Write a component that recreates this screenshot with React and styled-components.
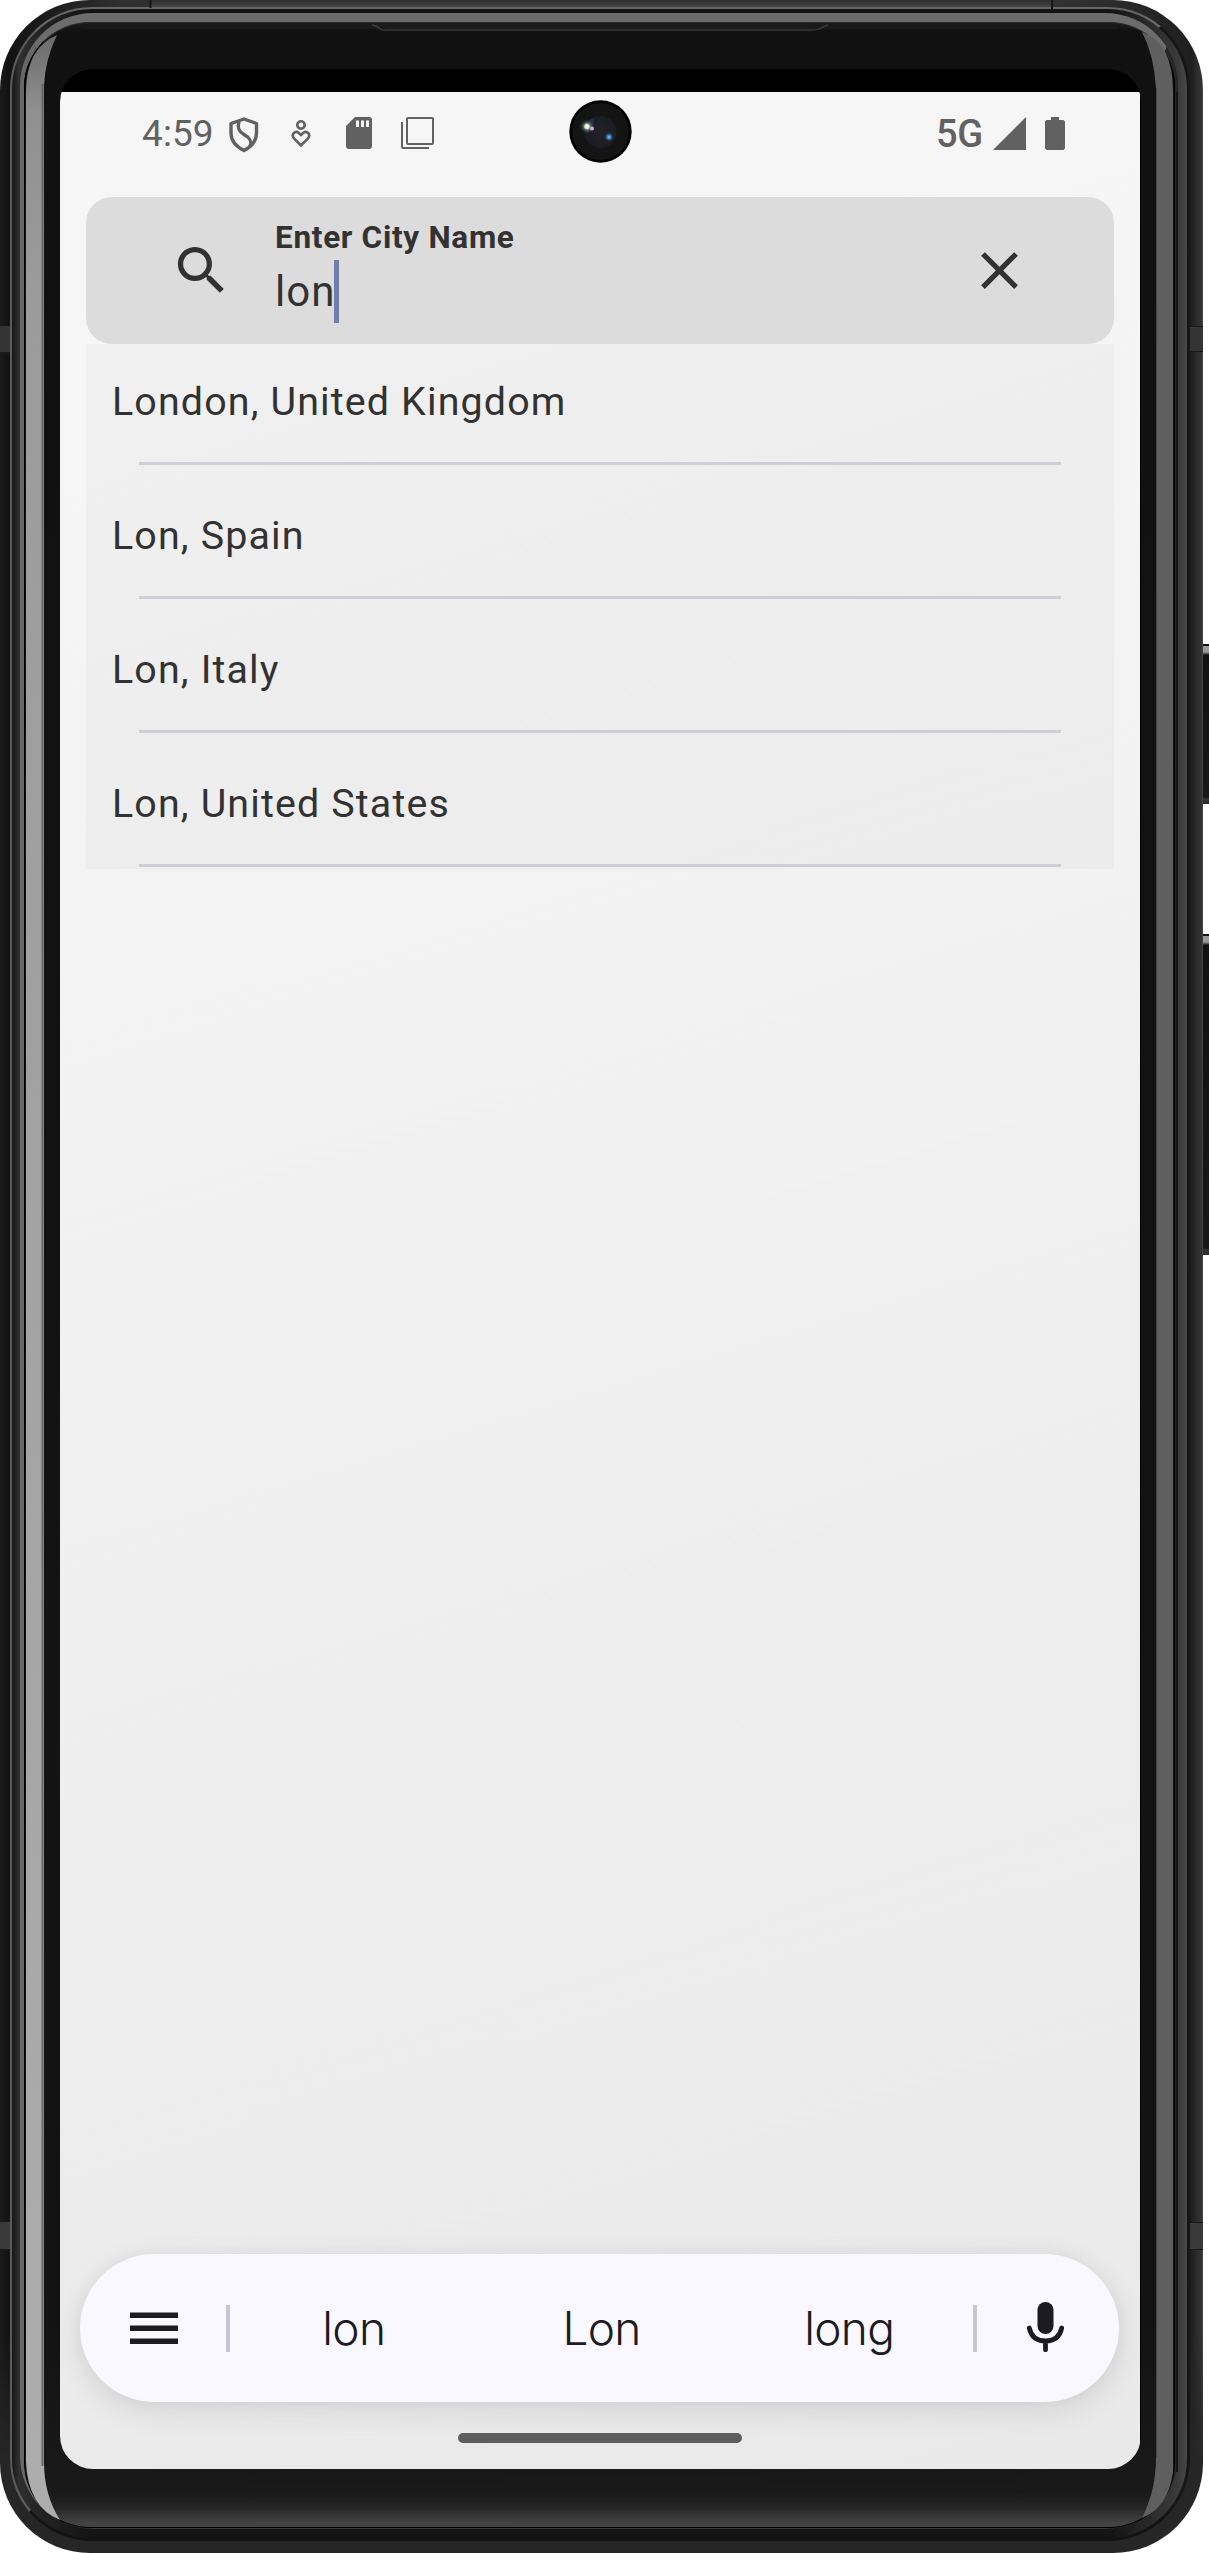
import React from "react";
import styled, { createGlobalStyle } from "styled-components";

const GlobalStyle = createGlobalStyle`
  * { box-sizing: border-box; }
  body { margin: 0; background: #fff; font-family: Roboto, "Liberation Sans", sans-serif; }
`;

const Stage = styled.div`
  position: relative;
  width: 1209px;
  height: 2553px;
  overflow: hidden;
`;

/* ---------- device ---------- */

const Body = styled.div`
  position: relative;
  display: flex;
  width: 1203px;
  height: 2553px;
  padding: 7px 13px 12px 10px;
  border-radius: 90px;
  background:
    linear-gradient(#0000 0 2330px, #262626 2460px),
    linear-gradient(90deg, #1a1a1a, #121212 9px, #2f2f2f 120px, #383838 600px, #303030 1080px, #1f1f1f 1192px, #2e2e2e 1198px, #333 1202px, #555);
`;

const Rim = styled.div`
  display: flex;
  flex: 1;
  padding: 4px 9px 9px 8px;
  border-style: solid;
  border-width: 2px 3px 3px 2px;
  border-color: #666 #161616 #131313 #5c5c5c;
  border-radius: 82px;
  background: linear-gradient(90deg, #161616, #303030 7px, #222 30px, #141414 80px, #141414 1100px, #3a3a3a 1166px, #484848);
  background-color: #222;
`;

const Lip = styled.div`
  display: flex;
  flex: 1;
  border-style: solid;
  border-width: 9px 3px 1px 4px;
  border-color: #6c6c6c #262626 #3a3a3a #686868;
  border-radius: 73px;
  background: #000;
`;

const Glass = styled.div`
  display: flex;
  flex: 1;
  padding: 46px 33px 58px 35px;
  border: 1px solid #000;
  border-top-color: #2c2c2c;
  border-radius: 66px;
  background: linear-gradient(#1c1c1c, #111 8px, #131313 2300px, #181818 2440px, #191919 2470px, #262626 2485px, #434343 2500px);
`;

const Display = styled.div`
  display: flex;
  flex: 1;
  padding: 23px 1px 0 0;
  border-radius: 33px;
  overflow: hidden;
  background: #000;
`;

const FrameArt = styled.svg`
  position: absolute;
  left: 0;
  top: 0;
  pointer-events: none;
`;

const SideKey = styled.div`
  position: absolute;
  left: 1202px;
  top: ${(p) => p.$top}px;
  width: 7px;
  height: ${(p) => p.$height}px;
  border-top: 2px solid #111;
  background: linear-gradient(#9a9a9a 0 6px, #111 9px, #161616 calc(100% - 7px), #333 calc(100% - 5px), #2a2a2a);
  background-origin: padding-box;
  background-repeat: no-repeat;
`;

/* ---------- screen ---------- */

const Screen = styled.main`
  display: flex;
  flex-direction: column;
  flex: 1;
  background: linear-gradient(163deg, #f6f6f6 12%, #f2f2f2 38%, #eeeeee 64%, #e9e9e9 100%);
  color: #323232;
`;

const StatusBar = styled.header`
  display: flex;
  align-items: center;
  justify-content: space-between;
  height: 105px;
  padding: 0 75px 22px 82px;
  color: #616161;
`;

const StatusGroup = styled.div`
  display: flex;
  align-items: center;
`;

const Clock = styled.time`
  width: 71px;
  font-size: 37px;
  line-height: 44px;
  white-space: nowrap;
  letter-spacing: 0.1px;
`;

const Network = styled.span`
  width: 50px;
  font-size: 38px;
  font-weight: 500;
  line-height: 44px;
  letter-spacing: -0.3px;
`;

const Glyph = styled.svg`
  display: block;
  flex: none;
  width: ${(p) => p.$w}px;
  height: ${(p) => p.$h}px;
  margin-left: ${(p) => p.$gap || 0}px;
  transform: translateY(${(p) => p.$dy || 0}px);
`;

const Camera = styled.svg`
  position: absolute;
  left: 569px;
  top: 100px;
`;

const SearchBar = styled.section`
  display: flex;
  align-items: center;
  height: 147px;
  margin: 0 26px;
  padding: 0 83px 0 84px;
  border-radius: 26px;
  background: #dcdcdc;
`;

const Field = styled.label`
  display: flex;
  flex-direction: column;
  flex: 1;
  margin-left: 42px;
`;

const FieldLabel = styled.span`
  margin-bottom: 2px;
  font-size: 31.5px;
  font-weight: 700;
  line-height: 40px;
  letter-spacing: 0.7px;
`;

const FieldValue = styled.span`
  display: flex;
  height: 63px;
  font-size: 42px;
  line-height: 63px;
  letter-spacing: 1px;
`;

const Caret = styled.i`
  width: 5px;
  height: 63px;
  margin-left: -1px;
  background: #6f7eaa;
`;

const Results = styled.ul`
  display: flex;
  flex-direction: column;
  gap: 12px;
  height: 525px;
  margin: 0 26px;
  padding: 0;
  list-style: none;
  background: rgba(0, 0, 0, 0.024);
`;

const Result = styled.li`
  height: 122px;
  padding: 26px 26px 0;
  font-size: 39.4px;
  line-height: 64px;
  letter-spacing: 1.14px;
  white-space: nowrap;

  &::after {
    content: "";
    display: block;
    height: 3px;
    margin: 28px 27px 0;
    background: #cfced8;
  }
`;

const Spacer = styled.div`
  flex: 1;
`;

const Suggestions = styled.section`
  display: flex;
  align-items: center;
  height: 148px;
  margin: 0 21px 0 20px;
  padding: 0 55px 0 50px;
  border-radius: 74px;
  background: #f9f8ff;
  box-shadow: 0 8px 30px rgba(0, 0, 0, 0.1), 0 0 16px rgba(0, 0, 0, 0.03);
  color: #1b1b21;
`;

const Words = styled.div`
  display: grid;
  grid-template-columns: repeat(3, 1fr);
  flex: 1;
  height: 47px;
  margin-left: 48px;
  border-left: 4px solid #c8c7d1;
  border-right: 4px solid #c8c7d1;
`;

const Word = styled.span`
  font-family: Inter, Roboto, sans-serif;
  font-size: 46px;
  font-weight: 350;
  line-height: 47px;
  text-align: center;
  letter-spacing: -0.7px;
`;

const HomeArea = styled.footer`
  display: flex;
  justify-content: center;
  height: 67px;
  padding-top: 31px;
`;

const Handle = styled.div`
  width: 284px;
  height: 10px;
  border-radius: 5px;
  background: #5e5e5e;
`;

const cities = ["London, United Kingdom", "Lon, Spain", "Lon, Italy", "Lon, United States"];
const words = ["lon", "Lon", "long"];

function FrameDetails() {
  return (
    <FrameArt width="1209" height="2553" viewBox="0 0 1209 2553" fill="none">
      <defs>
        <linearGradient id="glintLeft" x1="0" y1="36" x2="0" y2="2520" gradientUnits="userSpaceOnUse">
          <stop offset="0" stopColor="#6b6b6b" />
          <stop offset="0.03" stopColor="#909090" />
          <stop offset="0.1" stopColor="#9b9b9b" />
          <stop offset="1" stopColor="#adadad" />
        </linearGradient>
        <linearGradient id="keyTop" x1="0" y1="0" x2="0" y2="8" gradientUnits="userSpaceOnUse">
          <stop offset="0" stopColor="#303030" />
          <stop offset="1" stopColor="#484848" />
        </linearGradient>
      </defs>
      <path d="M151 0H1052V7H151Z" fill="url(#keyTop)" />
      <path d="M150.500 0V8M1052 0V10" stroke="#151515" strokeWidth="2" />
      <path d="M85 27.500H1118" stroke="#1a1a1a" strokeWidth="3" />
      <path d="M372 25Q376 25 379 28T386 30H812Q818 30 821 28T828 25" stroke="#3a3a3a" strokeWidth="1.500" />
      <path d="M57 35Q26 48 26 92V2462Q28 2507 60 2520Q44 2495 44 2462V86Q45 60 57 35Z" fill="url(#glintLeft)" />
      <path d="M42.500 84V2466" stroke="#666" strokeWidth="2" />
      <path d="M1142 32Q1173 42 1173 92V2472Q1168 2508 1142 2518Q1156 2490 1156 2458V88Q1154 55 1142 32Z" fill="#5f5f5f" />
      <path d="M1156.500 88V2458" stroke="#474747" />
      <path d="M1177 92V2472" stroke="#141414" strokeWidth="2" />
      <path d="M0 326H10V352H0ZM1190 327H1203V351H1190Z" fill="#343434" />
      <path d="M0 2222H10V2249H0ZM1190 2222H1203V2249H1190Z" fill="#393939" />
      <path d="M0 352.500H10M0 2221.500H10M0 2249.500H10M1190 326.500H1203M1190 351.500H1203M1190 2222.500H1203M1190 2249.500H1203" stroke="#191919" />
    </FrameArt>
  );
}

function FrontCamera() {
  return (
    <Camera width="63" height="63" viewBox="0 0 63 63">
      <defs>
        <radialGradient id="lens">
          <stop offset="0" stopColor="#24202b" />
          <stop offset="1" stopColor="#1b1c22" />
        </radialGradient>
        <radialGradient id="flare">
          <stop offset="0" stopColor="#fff" />
          <stop offset="0.28" stopColor="#dfe9cf" />
          <stop offset="0.5" stopColor="#5d7670" stopOpacity="0.7" />
          <stop offset="1" stopColor="#24313a" stopOpacity="0" />
        </radialGradient>
        <radialGradient id="spark">
          <stop offset="0" stopColor="#7fc6f5" />
          <stop offset="0.35" stopColor="#3c86bd" />
          <stop offset="1" stopColor="#1b3a60" stopOpacity="0" />
        </radialGradient>
      </defs>
      <circle cx="31.500" cy="31.500" r="31.200" fill="#000" />
      <circle cx="31.500" cy="31.500" r="28.500" fill="#141414" />
      <circle cx="31.500" cy="32" r="16" fill="url(#lens)" />
      <path d="M17 28Q18 20 25 18L24 27L18 33Z" fill="#29485d" opacity="0.6" />
      <circle cx="18" cy="26.500" r="7.500" fill="url(#flare)" />
      <circle cx="23" cy="28.500" r="2" fill="#dba7d0" />
      <circle cx="40" cy="37" r="5" fill="url(#spark)" />
    </Camera>
  );
}

function Status() {
  return (
    <StatusBar>
      <StatusGroup>
        <Clock>4:59</Clock>
        <Glyph $w={30} $h={36} $gap={16} $dy={1} viewBox="0 0 30 36" fill="none" stroke="currentColor" strokeWidth="3.4" strokeLinejoin="round">
          <path d="M15 2L27.500 6.500V16Q27.500 27 15 33.500Q2 27 2 16V6.500Z" />
          <path d="M10 4.500C8 11 10 14.500 15 17.500C22 21.500 23 25 21 29.500" />
        </Glyph>
        <Glyph $w={20} $h={28} $gap={32} viewBox="0 0 20 28" fill="none" stroke="currentColor" strokeWidth="2.600">
          <circle cx="10" cy="5" r="3.700" />
          <path d="M10 25.500L3 18.500C-.2 14.500 4 10.200 7.600 12.700L10 15L12.400 12.700C16 10.200 20.200 14.500 17 18.500Z" />
        </Glyph>
        <Glyph $w={26} $h={33} $gap={35} viewBox="0 0 26 33">
          <path fill="currentColor" fillRule="evenodd" d="M9 0H23Q26 0 26 3V29Q26 32 23 32H3Q0 32 0 29V9ZM10 3.500V10H13V3.500ZM15 3.500V10H18V3.500ZM20 3.500V10H23V3.500Z" />
        </Glyph>
        <Glyph $w={33} $h={33} $gap={29} viewBox="0 0 33 33" fill="none" stroke="currentColor" strokeWidth="2">
          <rect x="6" y="1" width="26" height="26" rx="1" />
          <path d="M1 5V30Q1 31 2 31H28" />
        </Glyph>
      </StatusGroup>
      <StatusGroup>
        <Network>5G</Network>
        <Glyph $w={33} $h={33} $gap={7} viewBox="0 0 33 33" fill="currentColor">
          <path d="M0 33L33 0V33Z" />
        </Glyph>
        <Glyph $w={20} $h={33} $gap={19} viewBox="0 0 20 33" fill="currentColor">
          <path d="M6 0H14V3H18.500L20 4.500V31.500L18.500 33H1.500L0 31.500V4.500L1.500 3H6Z" />
        </Glyph>
      </StatusGroup>
    </StatusBar>
  );
}

function Search() {
  return (
    <SearchBar>
      <Glyph $w={63} $h={63} viewBox="0 0 24 24" fill="currentColor">
        <path d="M15.500 14h-.79l-.28-.27C15.410 12.590 16 11.110 16 9.500 16 5.910 13.090 3 9.500 3S3 5.910 3 9.500 5.910 16 9.500 16c1.610 0 3.090-.59 4.230-1.570l.27.28v.79l5 4.990L20.490 19l-4.990-5zm-6 0C7.010 14 5 11.990 5 9.500S7.010 5 9.500 5 14 7.010 14 9.500 11.990 14 9.500 14z" />
      </Glyph>
      <Field>
        <FieldLabel>Enter City Name</FieldLabel>
        <FieldValue>
          lon
          <Caret />
        </FieldValue>
      </Field>
      <Glyph $w={63} $h={63} viewBox="0 0 24 24" fill="currentColor">
        <path d="M19 6.410L17.590 5 12 10.590 6.410 5 5 6.410 10.590 12 5 17.590 6.410 19 12 13.410 17.590 19 19 17.590 13.410 12z" />
      </Glyph>
    </SearchBar>
  );
}

function Keyboard() {
  return (
    <Suggestions>
      <Glyph $w={48} $h={32} viewBox="0 0 48 32" fill="currentColor">
        <path d="M0 .5H48V6H0ZM0 13.500H48V19H0ZM0 26.500H48V32H0Z" />
      </Glyph>
      <Words>
        {words.map((word) => (
          <Word key={word}>{word}</Word>
        ))}
      </Words>
      <Glyph $w={37} $h={50} $gap={50} $dy={-1} viewBox="0 0 37 50">
        <rect x="10.500" y="0" width="16" height="32" rx="8" fill="currentColor" />
        <path d="M2.300 26Q5 39 18.500 39T34.700 26M18.500 39V47.700" fill="none" stroke="currentColor" strokeWidth="4.800" strokeLinecap="round" />
      </Glyph>
    </Suggestions>
  );
}

export default function App() {
  return (
    <Stage>
      <GlobalStyle />
      <SideKey $top={644} $height={160} />
      <SideKey $top={934} $height={321} />
      <Body>
        <Rim>
          <Lip>
            <Glass>
              <Display>
                <Screen>
                  <Status />
                  <Search />
                  <Results>
                    {cities.map((city) => (
                      <Result key={city}>{city}</Result>
                    ))}
                  </Results>
                  <Spacer />
                  <Keyboard />
                  <HomeArea>
                    <Handle />
                  </HomeArea>
                </Screen>
              </Display>
            </Glass>
          </Lip>
        </Rim>
        <FrameDetails />
        <FrontCamera />
      </Body>
    </Stage>
  );
}
